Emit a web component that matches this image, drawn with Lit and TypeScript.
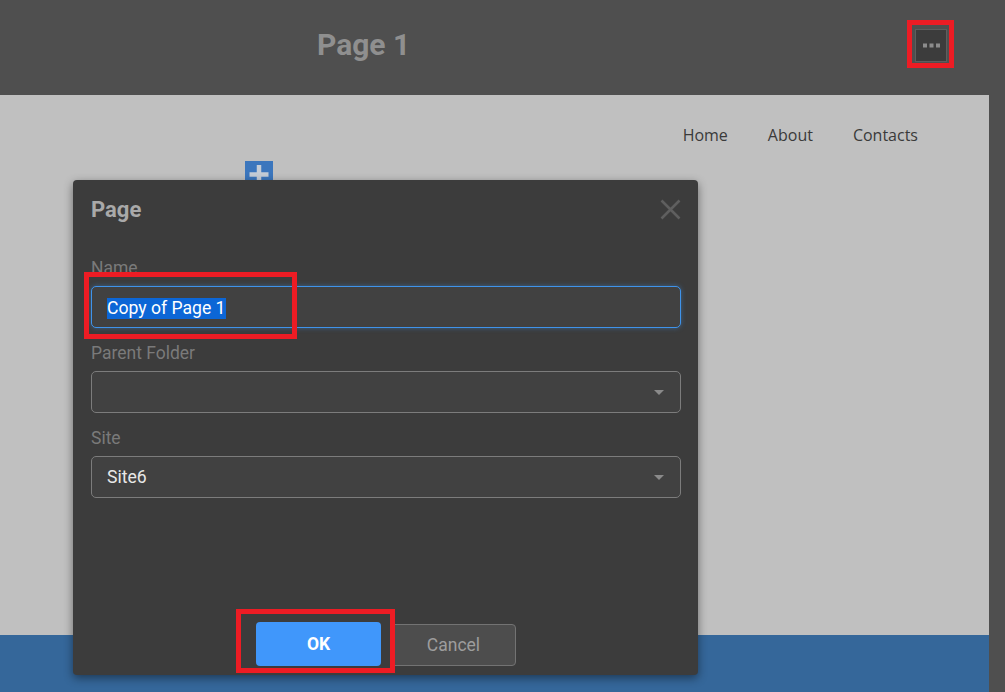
import { LitElement, html, css } from "lit";
import { customElement } from "lit/decorators.js";

@customElement("app-root")
export class AppRoot extends LitElement {
  static styles = css`
    :host { display: block; width: 1005px; height: 692px; position: relative; overflow: hidden; background: #4f4f4f; font-family: Roboto, sans-serif; }
    * { box-sizing: border-box; }
    .page { display: flex; flex-direction: column; height: 692px; }
    .top { height: 95px; flex: none; display: flex; align-items: center; padding-left: 317px; padding-right: 58px; justify-content: space-between; }
    .title { font-size: 30px; font-weight: 700; color: #8f8f8f; margin-top: -6px; }
    .dots { width: 32px; height: 33px; background: #3c3c3c; border: 1px solid #5e5e5e; display: flex; align-items: center; justify-content: center; margin-top: -5px; }
    .dots svg { display: block; }
    .body { flex: 1; width: 989px; display: flex; flex-direction: column; }
    .site { flex: 1; background: #c0c0c0; }
    .nav { display: flex; justify-content: flex-end; gap: 40px; padding: 29px 71px 0 0; font-family: "Open Sans", sans-serif; font-size: 16px; color: #3a3a3a; line-height: 22px; }
    .foot { height: 57px; flex: none; background: #35679a; }
    .plus { position: absolute; left: 245px; top: 161px; width: 28px; height: 24px; background: #3b76bd; }
    .plus svg { display: block; }
    .modal { position: absolute; left: 73px; top: 180px; width: 625px; height: 495px; background: #3c3c3c; border-radius: 4px; box-shadow: 0 3px 10px rgba(0,0,0,.45); padding: 0 17px 9px 18px; display: flex; flex-direction: column; }
    .head { height: 58px; flex: none; display: flex; align-items: center; justify-content: space-between; }
    .head h2 { margin: 1px 0 0; font-size: 22px; font-weight: 700; color: #a9a9a9; }
    .close { display: block; margin-top: 1px; }
    .form { display: flex; flex-direction: column; margin-top: 20px; }
    label { font-size: 17.500px; line-height: 20px; color: #7a7a7a; height: 28px; display: block; }
    .field { height: 42px; border: 1px solid #7c7c7c; border-radius: 5px; background: #414141; display: flex; align-items: center; justify-content: space-between; padding: 0 15px; font-size: 17.600px; color: #e8e8e8; margin-bottom: 15px; }
    .field.focus { border-color: #3f93ea; box-shadow: 0 0 5px rgba(63,147,234,.45); }
    .sel { background: #0c66d6; color: #fff; line-height: 21px; display: block; margin-top: 2px; }
    .caret { width: 0; height: 0; border-left: 5.500px solid transparent; border-right: 5.500px solid transparent; border-top: 5px solid #8a8a8a; margin-right: 1px; }
    .actions { margin-top: auto; padding-left: 165px; display: flex; gap: 10px; align-items: flex-end; }
    button { font-family: Roboto, sans-serif; font-size: 17.500px; height: 42px; border-radius: 4px; padding: 0; }
    .ok { width: 125px; height: 44px; background: #4097fb; color: #fff; font-weight: 700; border: none; }
    .cancel { width: 125px; background: #4d4d4d; color: #9d9d9d; border: 1px solid #737373; }
    .mark { position: absolute; border: 5px solid #ed1c24; }
    .m1 { left: 907px; top: 20px; width: 47px; height: 48px; }
    .m2 { left: 84px; top: 272px; width: 213px; height: 67px; }
    .m3 { left: 236px; top: 609px; width: 159px; height: 64px; }
  `;

  render() {
    return html`
      <div class="page">
        <div class="top">
          <div class="title">Page 1</div>
          <div class="dots">
            <svg width="17" height="5" viewBox="0 0 17 5"><path d="M0 .5h4v4H0zM6.500 .5h4v4h-4zM13 .5h4v4h-4z" fill="#8c8c8c"/></svg>
          </div>
        </div>
        <div class="body">
          <div class="site">
            <div class="nav"><span>Home</span><span>About</span><span>Contacts</span></div>
          </div>
          <div class="foot"></div>
        </div>
      </div>
      <div class="plus">
        <svg width="28" height="24" viewBox="0 0 28 24"><path d="M14 4v20M4.500 13.500h19" stroke="#c4ccd6" stroke-width="4.500" fill="none"/></svg>
      </div>
      <div class="modal">
        <div class="head">
          <h2>Page</h2>
          <svg class="close" width="21" height="21" viewBox="0 0 21 21"><path d="M1.500 1.500l18 18M19.500 1.500l-18 18" stroke="#5f5f5f" stroke-width="2.500" fill="none"/></svg>
        </div>
        <div class="form">
          <label>Name</label>
          <div class="field focus"><span class="sel">Copy of Page 1</span></div>
          <label>Parent Folder</label>
          <div class="field"><span></span><span class="caret"></span></div>
          <label>Site</label>
          <div class="field"><span>Site6</span><span class="caret"></span></div>
        </div>
        <div class="actions">
          <button class="ok">OK</button>
          <button class="cancel">Cancel</button>
        </div>
      </div>
      <div class="mark m1"></div>
      <div class="mark m2"></div>
      <div class="mark m3"></div>
    `;
  }
}
